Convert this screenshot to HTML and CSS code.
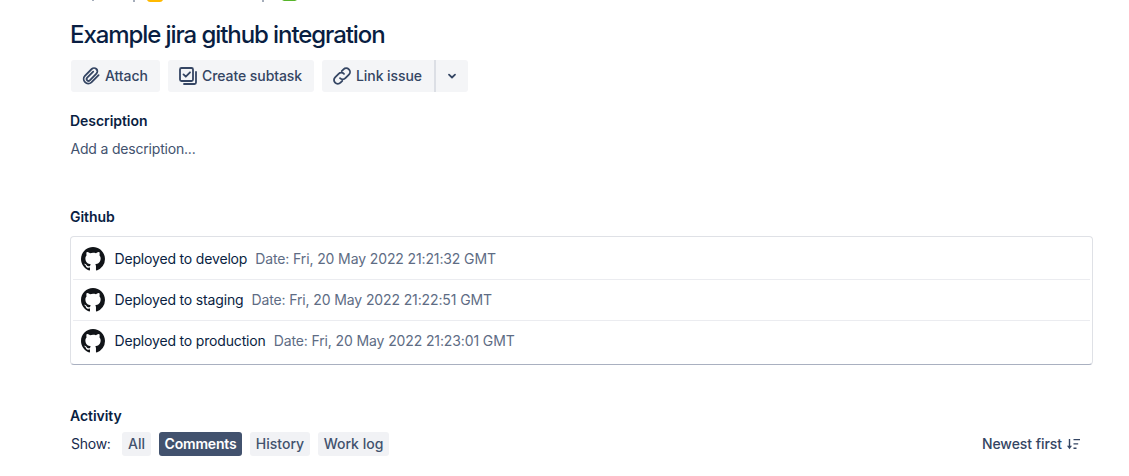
FILE: index.html
```html
<!DOCTYPE html>
<html lang="en">
<head>
<meta charset="utf-8">
<title>Example jira github integration</title>
<link rel="stylesheet" href="styles.css">
</head>
<body>
<svg class="defs" aria-hidden="true"><symbol id="github" viewBox="0 0 16 16"><path fill-rule="evenodd" d="M8 0C3.58 0 0 3.58 0 8c0 3.54 2.29 6.53 5.47 7.59.4.07.55-.17.55-.38 0-.19-.01-.82-.01-1.49-2.01.37-2.53-.49-2.69-.94-.09-.23-.48-.94-.82-1.13-.28-.15-.68-.52-.01-.53.63-.01 1.08.58 1.23.82.72 1.21 1.87.87 2.33.66.07-.52.28-.87.51-1.07-1.78-.2-3.64-.89-3.64-3.95 0-.87.31-1.59.82-2.15-.08-.2-.36-1.02.08-2.12 0 0 .67-.21 2.2.82A7.6 7.6 0 0 1 8 3.86c.68 0 1.36.09 2 .27 1.53-1.04 2.2-.82 2.2-.82.44 1.1.16 1.92.08 2.12.51.56.82 1.27.82 2.15 0 3.07-1.87 3.75-3.65 3.95.29.25.54.73.54 1.48 0 1.07-.01 1.93-.01 2.2 0 .21.15.46.55.38A8.01 8.01 0 0 0 16 8c0-4.42-3.58-8-8-8Z"/></symbol></svg>
<main class="issue">
  <div class="crumbs"><svg width="240" height="2" viewBox="0 0 240 2"><path class="tails" d="M22 0h2v1h-2zM63 0h2v2h-2zM192 0h2v2h-2z"/><path class="yellow" d="M77 0h16q-1 2-3 2H80q-2 0-3-2z"/><path class="green" d="M212 0h15l-2 1h-11z"/></svg></div>
  <h1 class="title">Example jira github integration</h1>
  <div class="actions">
    <button class="btn attach"><svg width="20" height="20" viewBox="0 0 20 20"><path d="M17.6 9.1 10.4 16.3a4.6 4.6 0 0 1-6.5-6.5l6.8-6.8a3.3 3.3 0 0 1 4.7 4.7l-6.6 6.6a1.8 1.8 0 0 1-2.6-2.6l6-6"/></svg><span>Attach</span></button>
    <button class="btn subtask"><svg width="20" height="20" viewBox="0 0 20 20"><rect x="2" y="2" width="13" height="13" rx="1.5"/><path d="m5.5 8.4 2.3 2.3 4.2-4.4M18 6v10.5a1.5 1.5 0 0 1-1.5 1.5H6"/></svg><span>Create subtask</span></button>
    <div class="split"><button class="btn link"><svg width="20" height="20" viewBox="0 0 20 20"><path d="M8 12.2a3.8 3.8 0 0 0 5.4 0l3.5-3.5a3.8 3.8 0 0 0-5.4-5.4L9.7 5.1M12 7.8a3.8 3.8 0 0 0-5.4 0l-3.5 3.5a3.8 3.8 0 0 0 5.4 5.4l1.8-1.8"/></svg><span>Link issue</span></button><button class="btn more"><svg width="10" height="8" viewBox="0 0 10 8"><path d="m2 2.7 3 2.8 3-2.8"/></svg></button></div>
  </div>
  <h2 class="heading">Description</h2>
  <p class="description">Add a description...</p>
  <h2 class="heading github-heading">Github</h2>
  <ul class="deployments">
    <li><svg class="logo"><use href="#github"/></svg><span class="name">Deployed to develop</span><span class="date">Date: Fri, 20 May 2022 21:21:32 GMT</span></li>
    <li><svg class="logo"><use href="#github"/></svg><span class="name">Deployed to staging</span><span class="date">Date: Fri, 20 May 2022 21:22:51 GMT</span></li>
    <li><svg class="logo"><use href="#github"/></svg><span class="name">Deployed to production</span><span class="date">Date: Fri, 20 May 2022 21:23:01 GMT</span></li>
  </ul>
  <h2 class="heading activity-heading">Activity</h2>
  <div class="activity">
    <span class="show">Show:</span>
    <button class="tab all">All</button><button class="tab comments selected">Comments</button><button class="tab history">History</button><button class="tab worklog">Work log</button>
    <button class="sort"><span>Newest first</span><svg width="14" height="14" viewBox="0 0 14 14"><path d="M2.5 2v8M6.5 2.6H13M6.5 6.9h4.7M6.5 11.2h3"/><path class="head" d="M0 8.8h5l-2.5 3.4z"/></svg></button>
  </div>
</main>
</body>
</html>
```

FILE: styles.css
```css
* { box-sizing: border-box; }
body { margin: 0; background: #fff; color: #172b4d; font: 14px/20px Inter, sans-serif; overflow: hidden; }
button { font: inherit; color: inherit; border: 0; background: none; padding: 0; margin: 0; white-space: nowrap; }
svg { fill: none; stroke: #344563; stroke-width: 1.8; stroke-linecap: round; stroke-linejoin: round; flex: none; }
.defs { display: none; }
.issue { width: 1023px; margin-left: 70px; }
.crumbs { display: flex; height: 2px; }
.crumbs svg { stroke: none; }
.tails { fill: #a5adba; }
.yellow { fill: #ffb900; }
.green { fill: #57b52b; }
.title { margin: 18px 0 0; height: 30px; font-size: 24px; line-height: 30px; font-weight: 500; letter-spacing: -1.08px; color: #091e42; white-space: nowrap; }
.actions { display: flex; gap: 8px; margin: 10px 0 0 1px; height: 32px; }
.btn { display: flex; align-items: center; height: 32px; background: #f4f5f7; border-radius: 3px; font-weight: 500; letter-spacing: -0.07px; color: #344563; padding-left: 10px; gap: 4px; }
.attach { width: 89px; }
.subtask { width: 146px; }
.split { display: flex; }
.link { width: 112px; border-radius: 3px 0 0 3px; }
.more { width: 34px; border-left: 2px solid #dcdfe5; border-radius: 0 3px 3px 0; padding-left: 11px; }
.heading { margin: 19px 0 0; font-size: 14px; line-height: 20px; font-weight: 600; letter-spacing: -0.05px; color: #091e42; }
.description { margin: 8px 0 0 0.5px; letter-spacing: -0.19px; color: #42526e; }
.github-heading { margin-top: 48px; }
.deployments { list-style: none; margin: 9px 0 0; height: 129px; padding: 2px; border: 1px solid #dfe1e6; border-bottom-color: #a9b0c0; border-radius: 4px; }
.deployments li { display: flex; align-items: center; height: 41px; padding-left: 8px; border-bottom: 1px solid #ebecf0; }
.deployments li:last-child { border-bottom: 0; height: 40px; }
.logo { width: 24px; height: 24px; fill: #111418; stroke: none; }
.name { margin-left: 9.5px; letter-spacing: -0.17px; color: #091e42; }
.date { margin-left: 8px; letter-spacing: -0.12px; color: #5e6c84; }
.activity-heading { margin-top: 41px; }
.activity { display: flex; align-items: center; margin: 6px 0 0 1px; height: 24px; }
.show { width: 51px; letter-spacing: -0.25px; }
.tab { height: 24px; border-radius: 3px; background: #f1f2f5; font-weight: 500; color: #42526e; margin-right: 8px; }
.all { width: 29px; }
.comments { width: 83px; }
.history { width: 60px; }
.worklog { width: 71px; }
.selected { background: #42526e; color: #fff; font-weight: 600; letter-spacing: -0.2px; }
.sort { margin-left: auto; margin-right: 12px; display: flex; align-items: center; gap: 5px; font-weight: 500; letter-spacing: -0.06px; color: #344563; }
.sort svg { stroke-width: 1.4; stroke-linecap: butt; }
.sort .head { fill: #344563; stroke: none; }
```
